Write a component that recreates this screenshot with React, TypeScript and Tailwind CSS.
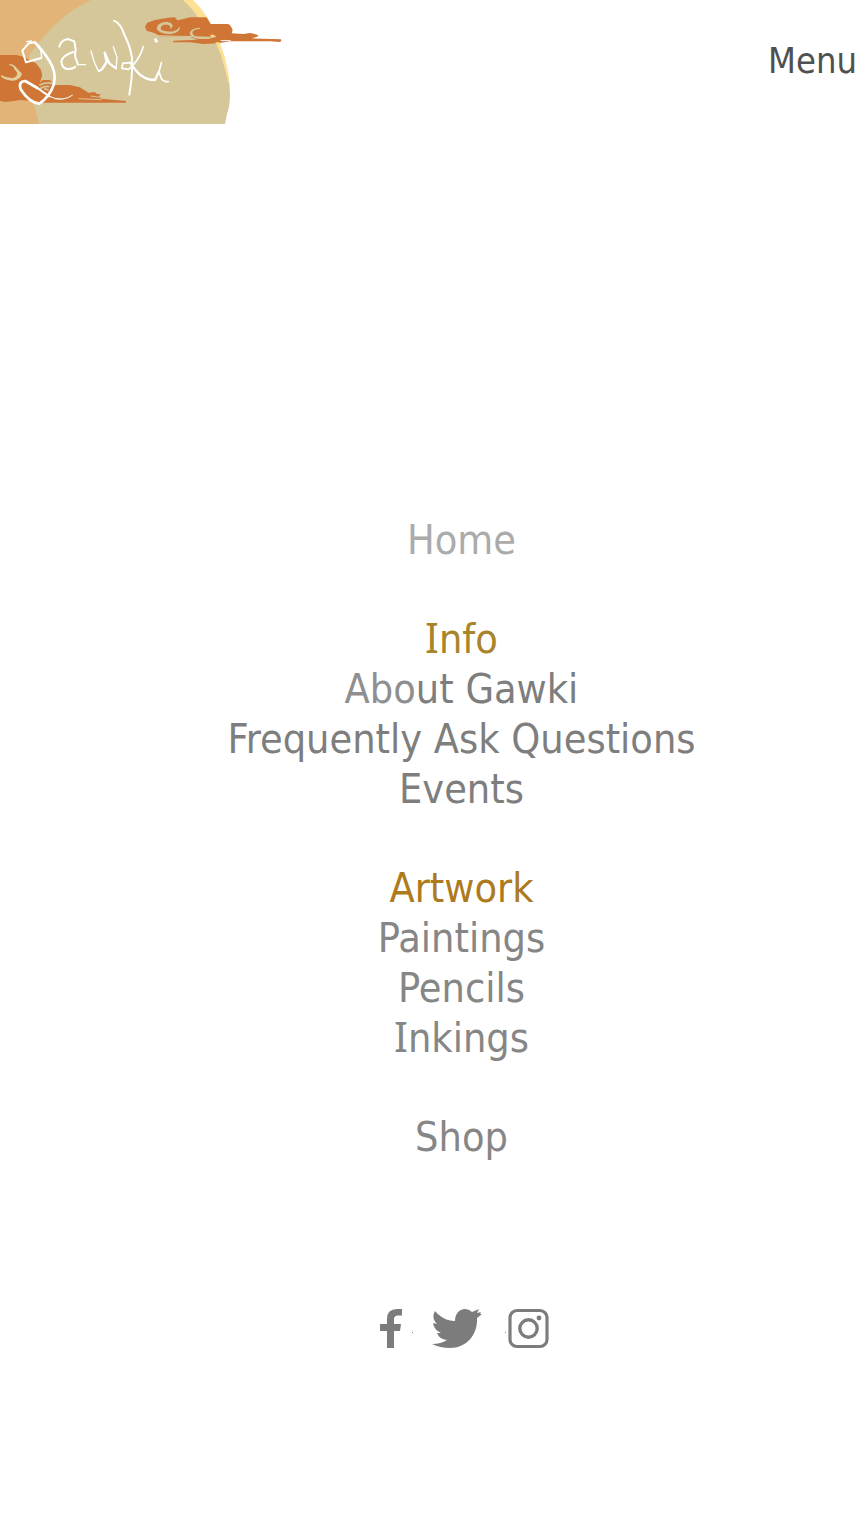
import type { ReactNode } from 'react';

type Entry = { label: ReactNode; color: string };

function SerifI() {
  return <span className="font-['Noto_Sans',sans-serif] leading-none">I</span>;
}

const infoLinks: Entry[] = [
  { label: <><span className="text-[#8f8f8f]">Abo</span>ut Gawki</>, color: 'text-[#7e7e7e]' },
  { label: 'Frequently Ask Questions', color: 'text-[#7e7e7e]' },
  { label: 'Events', color: 'text-[#7e7e7e]' },
];

const artworkLinks: Entry[] = [
  { label: 'Paintings', color: 'text-[#868686]' },
  { label: 'Pencils', color: 'text-[#868686]' },
  { label: <><SerifI />nkings</>, color: 'text-[#868686]' },
];

function Logo() {
  return (
    <svg className="block h-[125px] w-[290px]" viewBox="0 0 290 125" fill="none" aria-hidden="true">
      {/* sky and moon */}
      <path fill="#e3b478" d="M0 0H100V124H0Z" />
      <path
        fill="#d5c799"
        d="M91 0H186Q207 18 219 45Q230 72 230 94Q230 106 227 114L225 124H39Q36 111 33 101L29 55Q43 36 57 23Q73 8 91 0Z"
      />
      <path fill="#fde093" d="M183 0H193Q203 9 211 24L204 20L198 17Q192 8 183 0Z" />
      <path fill="#fde093" d="M216 43H220L225 58L229 77V84L227 77L221 55Z" />
      {/* left cloud */}
      <g transform="scale(.33333)">
        <path
          fill="#cf7536"
          d="M0 165H50L75 172L88 180L108 190L122 208L127 225L120 248L128 240H150L158 248L150 252L168 255L210 255L240 262L265 278L285 276L290 282L303 283L296 289L304 296L378 303V308H130L95 303L60 300L35 304L15 306L0 303Z"
        />
        <path
          fill="#e0cf9c"
          d="M28 192Q42 192 50 204L66 221Q64 236 42 242Q18 242 3 230V225Q24 236 42 233Q56 226 50 216L42 206Q42 198 28 196Z"
        />
        <path stroke="#d5c799" strokeWidth="5" d="M118 256Q136 246 160 250M116 268Q134 256 148 260M146 270L132 266" />
        <path stroke="#d5c799" strokeWidth="3" d="M272 288L298 292M165 297H190M236 296L305 299" />
      </g>
      {/* right cloud */}
      <g transform="translate(140 0) scale(.33333)">
        <path
          fill="#cf7536"
          d="M15 80L22 68L45 60L85 53L105 52L112 61L130 57L150 52H200L212 72H265L272 78L278 90L275 100L310 102L330 99L352 104L355 109L335 115L423 118L424 122L420 126L390 124H270L235 130L190 132L150 127H100V122L172 119L150 110L60 109L45 100L20 92Z"
        />
        <path
          fill="#d5c799"
          d="M80 65Q98 68 98 78L92 88L90 78Q84 72 72 74Q58 80 64 90Q86 98 104 92Q116 88 117 80L120 84Q118 98 92 102Q58 102 50 86Q50 68 80 65Z"
        />
        <path fill="#d5c799" d="M180 83V87Q160 88 157 97Q158 106 168 109L212 110L228 107V111L205 117H175Q150 112 149 100Q152 84 180 83Z" />
        <path stroke="#d5c799" strokeWidth="3" d="M52 107L160 110" />
        <path stroke="#fff" strokeWidth="3" d="M242 122H272" />
        <path fill="#fde093" d="M212 104h11v6h-11ZM226 127h14l-4 4h-8Z" />
      </g>
      {/* hand lettering strokes */}
      <g transform="scale(.33333)" stroke="#fff" strokeLinecap="round" strokeLinejoin="round">
        <path strokeWidth="6" d="M124 174L78 187L67 152L86 130L104 127" />
        <path strokeWidth="4" d="M80 125L94 123M108 132L122 150L125 172" />
        <path strokeWidth="8" d="M104 127Q124 146 148 182Q170 216 162 252Q148 292 118 311Q88 309 62 268Q54 244 76 243L112 264" />
        <path strokeWidth="6" d="M112 264L148 289" />
        <path strokeWidth="3" d="M148 289Q185 308 217 286" />
        <path strokeWidth="6" d="M178 140Q182 120 204 117L223 124L227 148L225 168L234 194M220 156Q188 166 184 184Q186 206 204 207Q222 206 226 200" />
        <path strokeWidth="4" d="M234 194H256" />
        <path strokeWidth="4" d="M273 153L282 184L295 214" />
        <path strokeWidth="7" d="M297 213L306 208L320 186L314 158L328 190L348 205" />
        <path strokeWidth="4" d="M348 205L351 172L340 140" />
        <path strokeWidth="6" d="M342 62Q362 70 372 102Q398 152 397 195Q396 240 388 284" />
        <path strokeWidth="5" d="M430 140Q417 182 386 208L366 205L368 190L390 188" />
        <path strokeWidth="7" d="M390 188L408 212Q432 240 465 240L476 216" />
        <path strokeWidth="5" d="M484 188L477 215L485 238L496 245H505" />
      </g>
      <path fill="#fff" d="M154 39L156 38L158 41L157 43L155 42Z" />
    </svg>
  );
}

function LinkList({ items }: { items: Entry[] }) {
  return (
    <ul>
      {items.map((item, index) => (
        <li key={index}>
          <a href="#" className={item.color}>{item.label}</a>
        </li>
      ))}
    </ul>
  );
}

export default function App() {
  return (
    <div className="min-h-screen bg-white font-['DejaVu_Sans_Condensed','DejaVu_Sans',sans-serif]">
      <header className="flex items-start justify-between">
        <a href="#" aria-label="gawki">
          <Logo />
        </a>
        <button type="button" className="mt-10 mr-2 text-[36px] leading-[42px] text-[#505050]">
          Menu
        </button>
      </header>

      <main className="flex flex-col items-center pt-[390px] pl-[58px]">
        <nav aria-label="Main" className="flex flex-col gap-[49px] text-center text-[41px] leading-[50px]">
          <a href="#" className="text-[#ababab]">Home</a>
          <section>
            <h2 className="text-[#a8842c]"><SerifI />nfo</h2>
            <LinkList items={infoLinks} />
          </section>
          <section>
            <h2 className="text-[#ad7a20]">Artwork</h2>
            <LinkList items={artworkLinks} />
          </section>
          <a href="#" className="text-[#868686]">Shop</a>
        </nav>

        <div className="mt-[146px] ml-1.5 flex items-start text-[#7c7c7c]">
          <a href="#" aria-label="Facebook">
            <svg className="block h-[42px] w-[52px]" viewBox="0 0 52 42" fill="currentColor" aria-hidden="true">
              <path d="M7 40V23H0V16H7V11Q7 1 17 1H22V7.500H18Q14 7.500 14 11V16H21L20 23H14V40Z" />
              <path d="M32 24h1v1h-1Z" />
            </svg>
          </a>
          <a href="#" aria-label="Twitter">
            <svg className="block h-[42px] w-[72px]" viewBox="0 0 72 42" fill="currentColor" aria-hidden="true">
              <path d="M2 3C7 9 14 13 22 13C22 6 26 1 32 1Q36 1 39 4L46 1L44 5L48 4L47 6L49 6L44 10C45 26 34 40 17 40Q7 40 -1 36Q8 36 14 32Q6 31 4 25H8Q1 22 0 15L4 16Q-2 10 2 3Z" transform="translate(1 0)" />
            </svg>
          </a>
          <a href="#" aria-label="Instagram">
            <svg className="block h-[42px] w-[46px]" viewBox="0 0 46 42" fill="none" aria-hidden="true">
              <path fill="currentColor" d="M1 24h1v1h-1Z" />
              <rect x="6" y="2.5" width="37" height="36" rx="7" stroke="currentColor" strokeWidth="3.200" />
              <circle cx="24.5" cy="20.5" r="8.700" stroke="currentColor" strokeWidth="3.400" />
              <circle cx="35" cy="10" r="2.400" fill="currentColor" />
            </svg>
          </a>
        </div>
      </main>
    </div>
  );
}
